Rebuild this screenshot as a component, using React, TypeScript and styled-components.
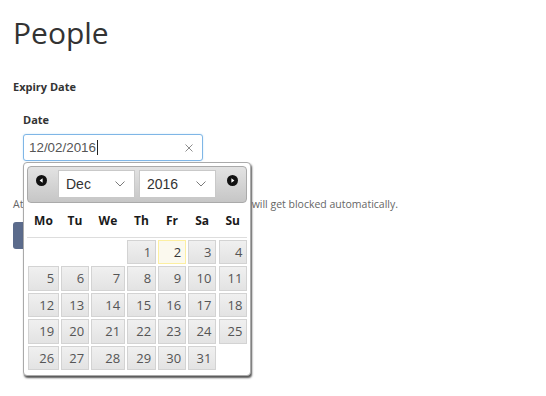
import React from "react";
import styled, { createGlobalStyle } from "styled-components";

const GlobalStyle = createGlobalStyle`
  html, body {
    margin: 0;
    padding: 0;
    background: #fff;
    min-height: 100%;
  }
  body {
    font-family: "Open Sans", "Liberation Sans", sans-serif;
    color: #333;
  }
`;

const COLS = "30.4px 27.4px 33.4px 28.4px 27.4px 27.7px 28.4px";
const DAY_NAMES = ["Mo", "Tu", "We", "Th", "Fr", "Sa", "Su"];
const WEEKS: (number | null)[][] = [
  [null, null, null, 1, 2, 3, 4],
  [5, 6, 7, 8, 9, 10, 11],
  [12, 13, 14, 15, 16, 17, 18],
  [19, 20, 21, 22, 23, 24, 25],
  [26, 27, 28, 29, 30, 31, null],
];
const TODAY = 2;

const Arrow = ({ dir }: { dir: "prev" | "next" }) => (
  <svg width="11" height="11" viewBox="0 0 11 11">
    <circle cx="5.5" cy="5.5" r="5.5" fill="#111" />
    {dir === "prev" ? (
      <path d="M3.6 5.5 L6.6 3.2 L6.6 7.8 Z" fill="#fff" />
    ) : (
      <path d="M7.4 5.5 L4.4 3.2 L4.4 7.8 Z" fill="#fff" />
    )}
  </svg>
);

const Chevron = () => (
  <svg width="10" height="6" viewBox="0 0 10 6">
    <polyline points="0.5,0.5 5,5 9.5,0.5" fill="none" stroke="#7a7a7a" strokeWidth="1" />
  </svg>
);

const ClearIcon = () => (
  <svg width="8" height="8" viewBox="0 0 8 8">
    <path d="M0.5 0.5 L7.5 7.5 M7.5 0.5 L0.5 7.5" stroke="#8d8d8d" strokeWidth="1" />
  </svg>
);

const App = () => {
  return (
    <Page>
      <GlobalStyle />
      <Title>People</Title>
      <SectionLabel>Expiry Date</SectionLabel>
      <Field>
        <FieldLabel>Date</FieldLabel>
        <InputWrap>
          <DateInput>
            <InputText>12/02/2016</InputText>
            <Caret />
            <ClearButton>
              <ClearIcon />
            </ClearButton>
          </DateInput>
          <Picker>
            <PickerHeader>
              <NavIcon $left={8}>
                <Arrow dir="prev" />
              </NavIcon>
              <Select $left={11}>
                <span>Dec</span>
                <Chevron />
              </Select>
              <Select $left={3.6}>
                <span>2016</span>
                <Chevron />
              </Select>
              <NavIcon $left={10.3}>
                <Arrow dir="next" />
              </NavIcon>
            </PickerHeader>
            <DayNames>
              {DAY_NAMES.map((d) => (
                <DayName key={d}>{d}</DayName>
              ))}
            </DayNames>
            <DateGrid>
              {WEEKS.flat().map((d, i) =>
                d === null ? (
                  <EmptyCell key={i} />
                ) : (
                  <DayCell key={i} $today={d === TODAY}>
                    {d}
                  </DayCell>
                )
              )}
            </DateGrid>
          </Picker>
        </InputWrap>
      </Field>
      <HelpText>At the end of the expiry date, the chosen person will get blocked automatically.</HelpText>
      <SaveButton>Save</SaveButton>
    </Page>
  );
};
export default App;

const Page = styled.div`
  box-sizing: border-box;
  min-height: 396px;
  padding: 1px 13px 0;
`;
const Title = styled.h1`
  margin: 14px 0 0;
  font-size: 30px;
  font-weight: 400;
  line-height: 36px;
  color: #333;
`;
const SectionLabel = styled.div`
  margin-top: 28px;
  font-size: 11px;
  font-weight: 700;
  line-height: 16px;
  color: #333;
`;
const Field = styled.div`
  padding-left: 10px;
`;
const FieldLabel = styled.div`
  margin-top: 17px;
  font-size: 11px;
  font-weight: 700;
  line-height: 16px;
  color: #333;
`;
const InputWrap = styled.div`
  position: relative;
  width: 180px;
  margin-top: 6px;
`;
const DateInput = styled.div`
  box-sizing: border-box;
  height: 27px;
  display: flex;
  align-items: center;
  padding: 0 9px 0 5px;
  border: 1px solid #7fb6e6;
  border-radius: 3px;
  box-shadow: 0 0 2px rgba(102, 175, 233, 0.35);
  background: #fff;
`;
const InputText = styled.span`
  font-family: "Liberation Sans", Arial, sans-serif;
  font-size: 13.4px;
  color: #555;
`;
const Caret = styled.span`
  width: 1px;
  height: 15px;
  background: #222;
  margin-left: 1px;
`;
const ClearButton = styled.span`
  margin-left: auto;
  display: flex;
`;
const Picker = styled.div`
  position: absolute;
  left: 0;
  top: 28px;
  box-sizing: border-box;
  width: 228px;
  padding: 3px;
  border: 1px solid #aaa;
  border-radius: 4px;
  background: #fff;
  box-shadow: 1px 2px 2px #555;
  z-index: 2;
`;
const PickerHeader = styled.div`
  box-sizing: border-box;
  height: 37px;
  display: flex;
  align-items: flex-start;
  border: 1px solid #aaa;
  border-radius: 4px;
  background: linear-gradient(#e3e3e3, #c6c6c6);
`;
const NavIcon = styled.span<{ $left: number }>`
  display: flex;
  margin: 8px 0 0 ${(p) => p.$left}px;
`;
const Select = styled.div<{ $left: number }>`
  box-sizing: border-box;
  width: 77.4px;
  height: 28px;
  margin: 3px 0 0 ${(p) => p.$left}px;
  padding: 0 9px 0 7px;
  display: flex;
  align-items: center;
  justify-content: space-between;
  border: 1px solid #c9c9c9;
  background: #fff;
  font-family: "Liberation Sans", Arial, sans-serif;
  font-size: 14px;
  color: #333;
`;
const DayNames = styled.div`
  height: 34px;
  display: grid;
  grid-template-columns: ${COLS};
  column-gap: 2.6px;
  align-items: center;
  padding: 0 1.3px;
  border-bottom: 1px solid #ddd;
`;
const DayName = styled.span`
  text-align: center;
  font-size: 12px;
  font-weight: 700;
  color: #1a1a1a;
`;
const DateGrid = styled.div`
  display: grid;
  grid-template-columns: ${COLS};
  grid-auto-rows: 24.5px;
  column-gap: 2.6px;
  row-gap: 2px;
  margin: 1.5px 1.3px 2px;
`;
const EmptyCell = styled.span``;
const DayCell = styled.span<{ $today: boolean }>`
  box-sizing: border-box;
  display: flex;
  align-items: center;
  justify-content: flex-end;
  padding-right: 3.5px;
  border: 1px solid ${(p) => (p.$today ? "#fcefa1" : "#d3d3d3")};
  background: ${(p) => (p.$today ? "#fbf9ee" : "linear-gradient(#f0f0f0, #e3e3e3)")};
  font-size: 13px;
  color: ${(p) => (p.$today ? "#363636" : "#555")};
`;
const HelpText = styled.p`
  margin: 35px 0 0;
  font-size: 10.5px;
  line-height: 16px;
  color: #666;
  white-space: nowrap;
`;
const SaveButton = styled.button`
  margin-top: 10px;
  height: 27px;
  padding: 0 14px;
  border: none;
  border-radius: 3px;
  background: #5b6b8c;
  color: #fff;
  font-family: "Open Sans", sans-serif;
  font-size: 12px;
`;
